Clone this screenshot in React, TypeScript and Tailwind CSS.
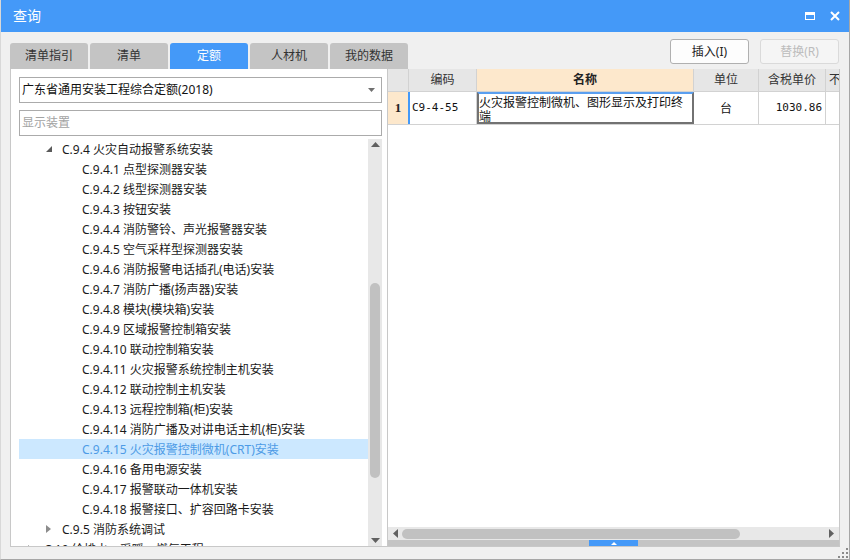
import React from "react";

const tabs = ["清单指引", "清单", "定额", "人材机", "我的数据"];

type Node = { code: string; name: string; level: 1 | 2 | 3; open?: boolean; leaf?: boolean };

const tree: Node[] = [
  { code: "C.9.4", name: "火灾自动报警系统安装", level: 2, open: true },
  { code: "C.9.4.1", name: "点型探测器安装", level: 3, leaf: true },
  { code: "C.9.4.2", name: "线型探测器安装", level: 3, leaf: true },
  { code: "C.9.4.3", name: "按钮安装", level: 3, leaf: true },
  { code: "C.9.4.4", name: "消防警铃、声光报警器安装", level: 3, leaf: true },
  { code: "C.9.4.5", name: "空气采样型探测器安装", level: 3, leaf: true },
  { code: "C.9.4.6", name: "消防报警电话插孔(电话)安装", level: 3, leaf: true },
  { code: "C.9.4.7", name: "消防广播(扬声器)安装", level: 3, leaf: true },
  { code: "C.9.4.8", name: "模块(模块箱)安装", level: 3, leaf: true },
  { code: "C.9.4.9", name: "区域报警控制箱安装", level: 3, leaf: true },
  { code: "C.9.4.10", name: "联动控制箱安装", level: 3, leaf: true },
  { code: "C.9.4.11", name: "火灾报警系统控制主机安装", level: 3, leaf: true },
  { code: "C.9.4.12", name: "联动控制主机安装", level: 3, leaf: true },
  { code: "C.9.4.13", name: "远程控制箱(柜)安装", level: 3, leaf: true },
  { code: "C.9.4.14", name: "消防广播及对讲电话主机(柜)安装", level: 3, leaf: true },
  { code: "C.9.4.15", name: "火灾报警控制微机(CRT)安装", level: 3, leaf: true },
  { code: "C.9.4.16", name: "备用电源安装", level: 3, leaf: true },
  { code: "C.9.4.17", name: "报警联动一体机安装", level: 3, leaf: true },
  { code: "C.9.4.18", name: "报警接口、扩容回路卡安装", level: 3, leaf: true },
  { code: "C.9.5", name: "消防系统调试", level: 2 },
  { code: "C.10", name: "给排水、采暖、燃气工程", level: 1 },
];

const selected = "C.9.4.15";

const indent: Record<number, string> = { 1: "pl-[25px]", 2: "pl-[43px]", 3: "pl-[63px]" };

function Arrow({ open }: { open?: boolean }) {
  if (open) {
    return (
      <svg width="6" height="6" viewBox="0 0 6 6" className="absolute left-[-16px] top-[7px]">
        <path d="M6 0 L6 6 L0 6 Z" fill="#5a5a5a" />
      </svg>
    );
  }
  return (
    <svg width="5" height="8" viewBox="0 0 5 8" className="absolute left-[-16px] top-[6px]">
      <path d="M0 0 L5 4 L0 8 Z" fill="#8c8c8c" />
    </svg>
  );
}

function TreeRow({ node }: { node: Node }) {
  const isSel = node.code === selected;
  return (
    <div
      className={`h-[20px] shrink-0 flex items-center whitespace-nowrap ${indent[node.level]} ${
        isSel ? "bg-[#cce8ff] text-[#4d9be6]" : "text-[#1a1a1a]"
      }`}
    >
      <span className="relative leading-[20px] pt-[1px]">
        {!node.leaf && <Arrow open={node.open} />}
        {node.code} {node.name}
      </span>
    </div>
  );
}

function VScroll() {
  return (
    <div className="relative w-[14px] shrink-0 bg-[#e8e8e8]">
      <svg width="9" height="5" viewBox="0 0 9 5" className="absolute left-[3px] top-[3px]">
        <path d="M0 5 L4.5 0 L9 5 Z" fill="#606060" />
      </svg>
      <div className="absolute left-[2px] top-[144px] h-[195px] w-[10px] rounded-full bg-[#c1c1c1]" />
      <svg width="9" height="5" viewBox="0 0 9 5" className="absolute left-[3px] bottom-[3px]">
        <path d="M0 0 L9 0 L4.5 5 Z" fill="#606060" />
      </svg>
    </div>
  );
}

const mono = "font-['DejaVu_Sans_Mono','Liberation_Mono',monospace] text-[11px]";

export default function App() {
  return (
    <div className="w-[850px] h-[560px] flex flex-col bg-[#f0f0f0] border-l border-r border-b border-l-[#d8d8d8] border-r-[#a6a6a6] border-b-[#a6a6a6] font-['Noto_Sans','Noto_Sans_CJK_SC',sans-serif] text-[12px] relative overflow-hidden">
      {/* title bar */}
      <div className="h-[32px] shrink-0 bg-[#4499f8] flex items-center justify-between pl-[12px] pr-[9px] text-white">
        <span className="text-[14px] leading-none">查询</span>
        <div className="flex items-center gap-[15px]">
          <div className="w-[10px] h-[8px] border-[1.5px] border-t-[3px] border-white" />
          <svg width="10" height="10" viewBox="0 0 10 10">
            <path d="M1 1 L9 9 M9 1 L1 9" stroke="white" strokeWidth="2" />
          </svg>
        </div>
      </div>

      <div className="flex-1 flex flex-col pl-[9px] pr-[9px]">
        {/* tabs + buttons */}
        <div className="h-[37px] shrink-0 flex justify-between">
          <div className="flex gap-[2px] pt-[11px]">
            {tabs.map((t) => (
              <div
                key={t}
                className={`w-[78px] h-[26px] rounded-t-[3px] flex items-center justify-center text-[12px] ${
                  t === "定额" ? "bg-[#4499f8] text-white" : "bg-[#c4c4c4] text-[#333]"
                }`}
              >
                {t}
              </div>
            ))}
          </div>
          <div className="flex gap-[11px] pt-[7px] pr-[1px]">
            <button className="w-[79px] h-[25px] rounded-[3px] border border-[#b0b0b0] bg-[#fdfdfd] text-[#222] text-[12px]">
              插入(I)
            </button>
            <button className="w-[79px] h-[25px] rounded-[3px] border border-[#dadada] bg-[#f5f5f5] text-[#bcbcbc] text-[12px]">
              替换(R)
            </button>
          </div>
        </div>

        {/* content */}
        <div className="h-[478px] shrink-0 flex">
          {/* left panel */}
          <div className="w-[377px] shrink-0 bg-white border-l border-b border-[#c8c8c8] flex flex-col pl-[8px] pr-[5px] pt-[8px]">
            <div className="h-[26px] shrink-0 border border-[#ababab] flex items-center justify-between pl-[2px] pr-[6px]">
              <span className="text-[#111]">广东省通用安装工程综合定额(2018)</span>
              <svg width="7" height="4" viewBox="0 0 7 4">
                <path d="M0 0 L7 0 L3.5 4 Z" fill="#707070" />
              </svg>
            </div>
            <div className="h-[26px] mt-[7px] shrink-0 border border-[#ababab] flex items-center pl-[2px] text-[#a3a3a3]">
              显示装置
            </div>
            <div className="flex-1 mt-[3px] flex min-h-0">
              <div className="flex-1 flex flex-col overflow-hidden">
                {tree.map((n) => (
                  <TreeRow key={n.code} node={n} />
                ))}
              </div>
              <VScroll />
            </div>
          </div>

          {/* divider */}
          <div className="w-[1px] shrink-0 bg-[#c8c8c8]" />

          {/* grid */}
          <div className="w-[452px] shrink-0 bg-white border-r border-b border-[#c8c8c8] flex flex-col overflow-hidden">
            <div className="h-[23px] shrink-0 flex bg-[#e6e6e6] border-b border-[#d2d2d2] text-[#333] whitespace-nowrap">
              <div className="w-[21px] shrink-0 border-r border-[#d2d2d2]" />
              <div className="w-[68px] shrink-0 border-r border-[#d2d2d2] flex items-center justify-center">编码</div>
              <div className="w-[217px] shrink-0 border-r border-[#d2d2d2] bg-[#fde8cc] flex items-center justify-center font-bold text-[#222]">
                名称
              </div>
              <div className="w-[65px] shrink-0 border-r border-[#d2d2d2] flex items-center justify-center">单位</div>
              <div className="w-[67px] shrink-0 border-r border-[#d2d2d2] flex items-center justify-center">含税单价</div>
              <div className="w-[66px] shrink-0 flex items-center justify-center">不含税单价</div>
            </div>
            <div className="h-[33px] shrink-0 flex border-b border-[#d2d2d2] text-[#111] whitespace-nowrap">
              <div className="w-[20px] shrink-0 bg-[#fde8cc] flex items-center justify-center font-['Liberation_Serif',serif] font-bold text-[13px] text-[#222]">
                1
              </div>
              <div className={`w-[69px] shrink-0 border-l-2 border-l-[#4499f8] border-r border-r-[#d2d2d2] flex items-center pl-[2px] ${mono}`}>
                C9-4-55
              </div>
              <div className="w-[217px] shrink-0 border-2 border-[#727272] border-t-[#5a9ff0] whitespace-normal leading-[14px] pt-[1px] font-['Noto_Sans_CJK_SC',sans-serif]">
                火灾报警控制微机、图形显示及打印终端
              </div>
              <div className="w-[65px] shrink-0 border-r border-[#d2d2d2] flex items-center justify-center font-['Noto_Sans_CJK_SC',sans-serif]">
                台
              </div>
              <div className={`w-[67px] shrink-0 border-r border-[#d2d2d2] flex items-center justify-end pr-[3px] ${mono}`}>
                1030.86
              </div>
              <div className="w-[66px] shrink-0" />
            </div>
            <div className="flex-1" />
            {/* horizontal scrollbar */}
            <div className="h-[13px] shrink-0 bg-[#e8e8e8] relative">
              <svg width="5" height="9" viewBox="0 0 5 9" className="absolute left-[5px] top-[2px]">
                <path d="M5 0 L0 4.5 L5 9 Z" fill="#606060" />
              </svg>
              <div className="absolute left-[14px] top-[2px] w-[338px] h-[10px] rounded-full bg-[#c1c1c1]" />
              <svg width="5" height="9" viewBox="0 0 5 9" className="absolute right-[5px] top-[2px]">
                <path d="M0 0 L5 4.5 L0 9 Z" fill="#606060" />
              </svg>
            </div>
            <div className="h-[6px] shrink-0 bg-[#c4c4c4] flex justify-center">
              <div className="w-[49px] h-full bg-[#4499f8] flex items-center justify-center">
                <svg width="6" height="3" viewBox="0 0 6 3">
                  <path d="M0 3 L3 0 L6 3 Z" fill="white" />
                </svg>
              </div>
            </div>
          </div>
        </div>
        <div className="flex-1" />
      </div>

      {/* resize grip */}
      <svg width="10" height="10" viewBox="0 0 10 10" className="absolute right-[1px] bottom-[1px]">
        <rect x="8" y="0" width="2" height="2" fill="#8a8a8a" />
        <rect x="4" y="4" width="2" height="2" fill="#8a8a8a" />
        <rect x="8" y="4" width="2" height="2" fill="#8a8a8a" />
        <rect x="0" y="8" width="2" height="2" fill="#8a8a8a" />
        <rect x="4" y="8" width="2" height="2" fill="#8a8a8a" />
        <rect x="8" y="8" width="2" height="2" fill="#8a8a8a" />
      </svg>
    </div>
  );
}
